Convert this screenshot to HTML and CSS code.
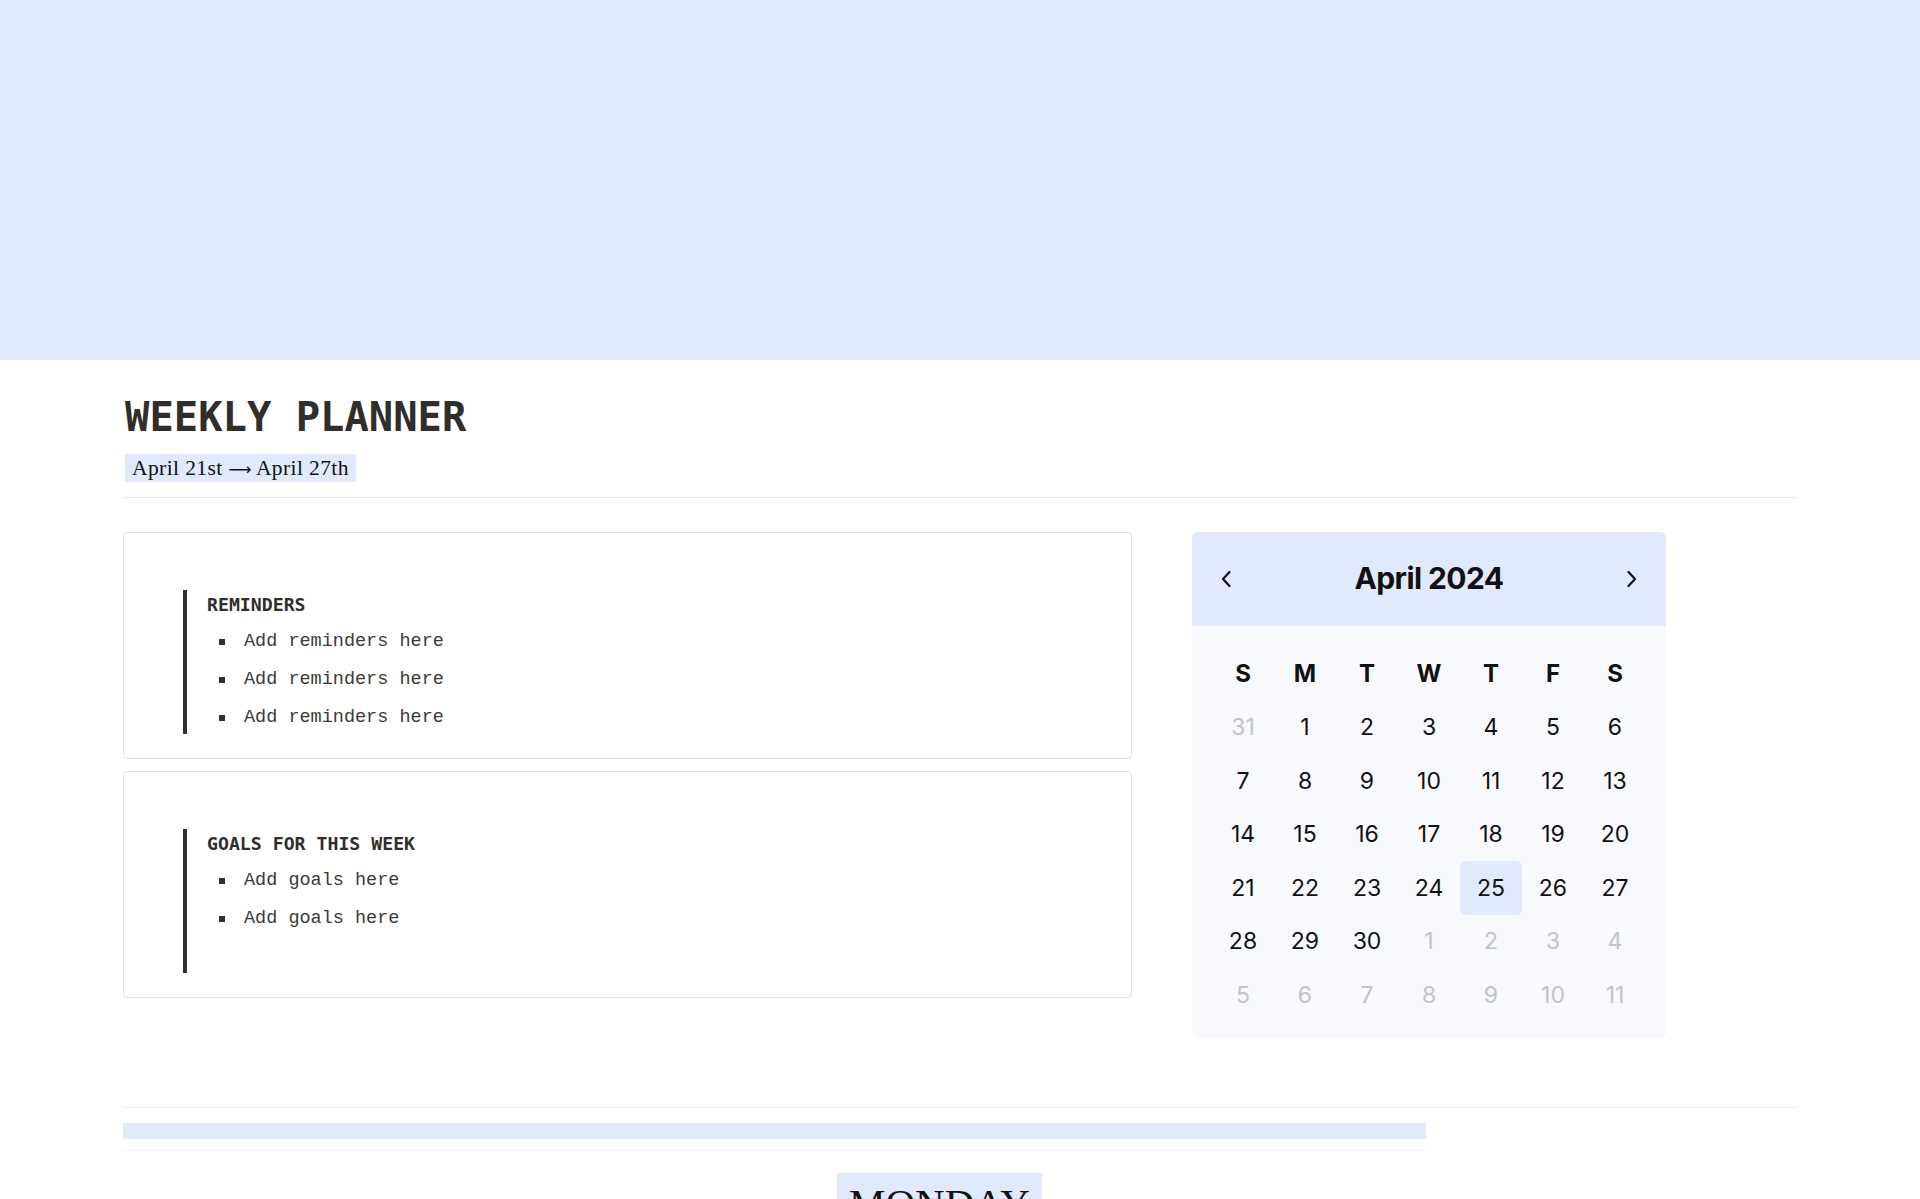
FILE: index.html
```html
<!DOCTYPE html>
<html>
<head>
    <title>Weekly Planner</title>
    <link rel="stylesheet" href="styles.css">
</head>
<body>
    <div class="cover"></div>

    <main class="page">
        <h1 class="title">WEEKLY PLANNER</h1>
        <span class="range">April 21st <span class="arrow">&#x27F6;</span> April 27th</span>
        <hr class="rule">

        <div class="overview">
            <div class="notes">
                <section class="card">
                    <div class="callout">
                        <h2>REMINDERS</h2>
                        <ul>
                            <li>Add reminders here</li>
                            <li>Add reminders here</li>
                            <li>Add reminders here</li>
                        </ul>
                    </div>
                </section>
                <section class="card">
                    <div class="callout">
                        <h2>GOALS FOR THIS WEEK</h2>
                        <ul>
                            <li>Add goals here</li>
                            <li>Add goals here</li>
                        </ul>
                    </div>
                </section>
            </div>

            <div class="calendar">
                <div class="cal-head">
                    <button class="cal-nav" type="button">
                        <svg width="12" height="18" viewBox="0 0 12 18"><polyline points="9.5,2 3,9 9.5,16" /></svg>
                    </button>
                    <span class="cal-month">April 2024</span>
                    <button class="cal-nav" type="button">
                        <svg width="12" height="18" viewBox="0 0 12 18"><polyline points="2.5,2 9,9 2.5,16" /></svg>
                    </button>
                </div>
                <div class="cal-grid" id="calGrid">
                    <span class="wd">S</span><span class="wd">M</span><span class="wd">T</span><span class="wd">W</span><span class="wd">T</span><span class="wd">F</span><span class="wd">S</span>
                </div>
            </div>
        </div>

        <hr class="rule rule-bottom">

        <div class="day-strip"><div class="day-bar"></div></div>
        <div class="day-row">
            <span class="day-name">MONDAY</span>
        </div>
    </main>

    <script>
        // April 2024 starts on a Monday; pad with the tail of March and the start of May
        const grid = document.getElementById('calGrid');
        const today = 25;
        const cells = [{ n: 31, muted: true }];
        for (let d = 1; d <= 30; d++) cells.push({ n: d });
        for (let d = 1; cells.length < 42; d++) cells.push({ n: d, muted: true });

        cells.forEach(c => {
            const el = document.createElement('span');
            el.className = 'day';
            if (c.muted) el.classList.add('muted');
            if (!c.muted && c.n === today) el.classList.add('today');
            el.textContent = c.n;
            grid.appendChild(el);
        });
    </script>
</body>
</html>
```

FILE: styles.css
```css
body {
    margin: 0;
    background-color: white;
    color: #32302c;
    font-family: "Liberation Mono", monospace;
}

.cover {
    height: 360px;
    background-color: #e0eafc;
}

.page {
    margin: 0 123px;
}

.title {
    margin: 33px 0 0 2px;
    font-family: "DejaVu Sans Mono", monospace;
    font-size: 40.5px;
    font-weight: bold;
    line-height: 48px;
    color: #2f2e2a;
}

.range {
    display: inline-block;
    margin-top: 13px;
    margin-left: 2px;
    padding: 0 7px;
    height: 28px;
    line-height: 29px;
    background-color: #e0eafc;
    font-family: "Liberation Serif", serif;
    font-size: 21.5px;
    letter-spacing: 0.4px;
    color: #111;
}

.range .arrow {
    font-family: "DejaVu Sans", sans-serif;
    font-size: 16px;
    letter-spacing: 0;
}

.rule {
    border: 0;
    border-top: 1px solid #e6e6e4;
    margin: 15px 0 0 0;
}

.overview {
    display: grid;
    grid-template-columns: 1009px 474px;
    column-gap: 60px;
    margin-top: 34px;
    align-items: start;
}

.notes {
    display: flex;
    flex-direction: column;
    gap: 12px;
}

.card {
    border: 1px solid #e3e3e1;
    border-radius: 4px;
    padding: 57px 0 24px 59px;
}

.callout {
    border-left: 4px solid #32302c;
    padding-left: 20px;
    min-height: 144px;
    box-sizing: border-box;
}

.callout h2 {
    margin: 0;
    font-family: "DejaVu Sans Mono", monospace;
    font-size: 18.2px;
    font-weight: bold;
    line-height: 30px;
    color: #2f2e2a;
}

.callout ul {
    list-style: none;
    margin: 0;
    padding: 0 0 0 12px;
}

.callout li {
    display: flex;
    align-items: center;
    height: 38px;
    padding-top: 5px;
    box-sizing: border-box;
    font-size: 18.5px;
    color: #3b3a36;
}

.callout li::before {
    content: "";
    width: 6px;
    height: 6px;
    margin-right: 19px;
    background-color: #32302c;
    flex-shrink: 0;
}

.calendar {
    background-color: #f7f9fc;
    border-radius: 6px;
    overflow: hidden;
    font-family: "Inter", sans-serif;
    color: #111;
}

.cal-head {
    height: 94px;
    background-color: #e0eafc;
    display: flex;
    align-items: center;
    justify-content: space-between;
    padding: 0 28px;
}

.cal-nav {
    background: none;
    border: none;
    padding: 0;
    width: 12px;
    height: 18px;
    cursor: pointer;
}

.cal-nav svg {
    display: block;
    fill: none;
    stroke: #111;
    stroke-width: 2.2;
    stroke-linecap: round;
    stroke-linejoin: round;
}

.cal-month {
    font-size: 30px;
    font-weight: 700;
    letter-spacing: -0.6px;
    margin-top: -2px;
}

.cal-grid {
    display: grid;
    grid-template-columns: repeat(7, 62px);
    grid-auto-rows: 53.5px;
    padding: 21px 20px 16px;
}

.wd,
.day {
    display: flex;
    align-items: center;
    justify-content: center;
}

.wd {
    font-size: 24px;
    font-weight: 700;
}

.day {
    font-size: 23px;
    border-radius: 6px;
}

.day.muted {
    color: #c3c3c3;
}

.day.today {
    background-color: #e0eafc;
}

.rule-bottom {
    margin-top: 69px;
}

.day-strip {
    width: 1303px;
    margin-top: 15px;
    padding-bottom: 11px;
    border-bottom: 1px solid #f4f5f7;
}

.day-bar {
    height: 16px;
    background-color: #e0eafc;
}

.day-row {
    display: flex;
    padding-left: 714px;
    margin-top: 22px;
}

.day-name {
    padding: 6px 12px 0;
    background-color: #e0eafc;
    font-family: "Liberation Serif", serif;
    font-size: 41px;
    color: #111;
}
```
